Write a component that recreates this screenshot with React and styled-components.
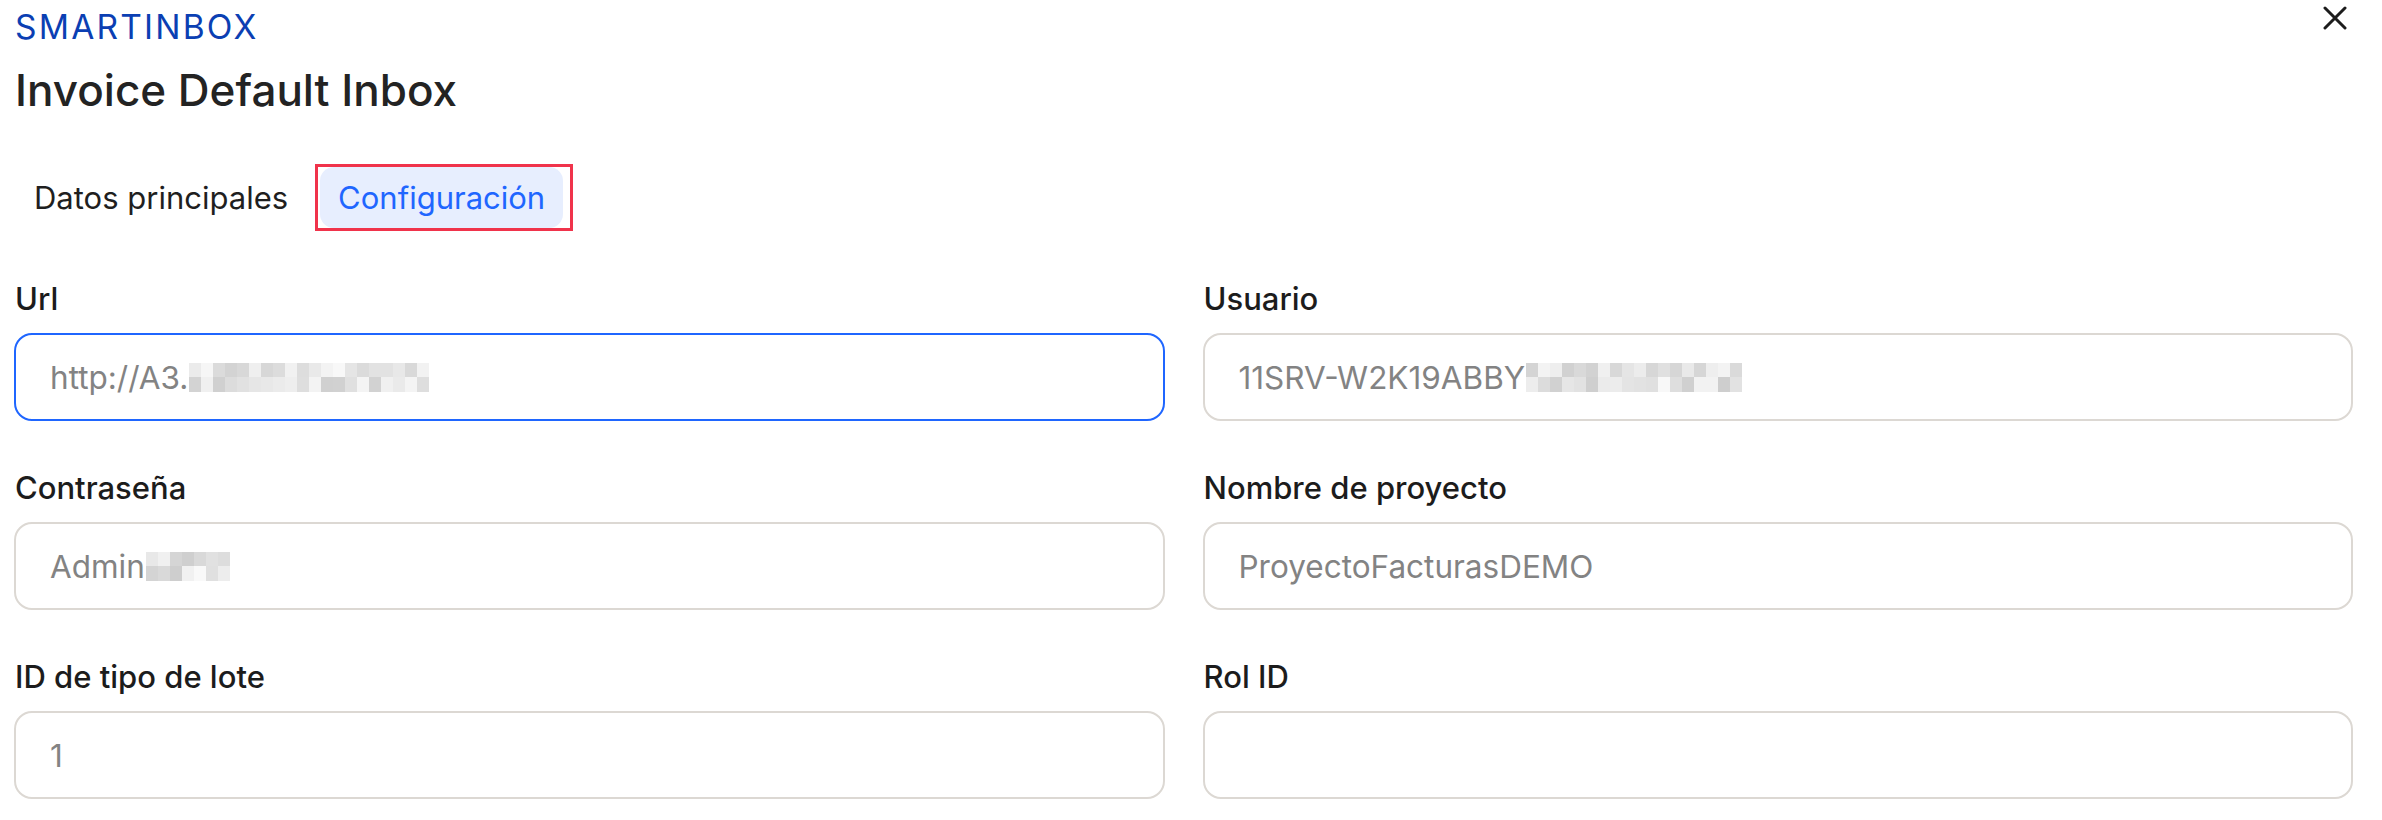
import React from 'react';
import styled, { createGlobalStyle } from 'styled-components';

const GlobalStyle = createGlobalStyle`
  html, body {
    margin: 0;
    padding: 0;
    background: #ffffff;
  }
  body {
    font-family: Inter, "Noto Sans", "Liberation Sans", sans-serif;
    color: #1f1f1f;
  }
`;

const Page = styled.div`
  padding: 0 29px 0 14px;
`;

const Header = styled.div`
  display: flex;
  justify-content: space-between;
  align-items: flex-start;
`;

const Brand = styled.div`
  margin-top: 7px;
  font-size: 33.5px;
  line-height: 40px;
  letter-spacing: 2.2px;
  color: #0b3fb3;
  padding-left: 1px;
`;

const CloseButton = styled.button`
  border: none;
  background: none;
  padding: 6px;
  margin: 0;
  cursor: pointer;
  display: flex;
  color: #1c1c1c;
`;

const Title = styled.h1`
  margin: 17px 0 0;
  padding-left: 1px;
  font-size: 44px;
  line-height: 52px;
  font-weight: 500;
  color: #232323;
`;

const Tabs = styled.div`
  display: flex;
  gap: 14px;
  margin-top: 51px;
  margin-left: 2px;
`;

const Tab = styled.button`
  position: relative;
  border: none;
  margin: 0;
  padding: 0 18px;
  height: 61px;
  line-height: 61px;
  border-radius: 14px;
  font-family: inherit;
  font-size: 31px;
  font-weight: 400;
  cursor: pointer;
  background: ${(p) => (p.$active ? '#e7eefe' : 'transparent')};
  color: ${(p) => (p.$active ? '#1f66ff' : '#1f1f1f')};
`;

const Highlight = styled.span`
  position: absolute;
  top: -3px;
  bottom: -3px;
  left: -5px;
  right: -10px;
  border: 3px solid #f0334b;
  pointer-events: none;
`;

const FormGrid = styled.div`
  display: grid;
  grid-template-columns: 1fr 1fr;
  column-gap: 38px;
  row-gap: 49px;
  margin-top: 53px;
`;

const Field = styled.div`
  display: flex;
  flex-direction: column;
  gap: 16px;
`;

const Label = styled.label`
  font-size: 31px;
  line-height: 36px;
  font-weight: 500;
  color: #1c1c1c;
  padding-left: 1px;
`;

const InputBox = styled.div`
  box-sizing: border-box;
  height: 88px;
  display: flex;
  align-items: center;
  padding: 0 34px;
  border: 2px solid ${(p) => (p.$focused ? '#1f66ff' : '#dcd8d3')};
  border-radius: 18px;
  background: #ffffff;
  font-size: 31.5px;
  color: #838383;
  white-space: nowrap;
  overflow: hidden;
`;

const Mosaic = styled.span`
  display: inline-grid;
  grid-template-columns: repeat(${(p) => p.$cols}, 12px);
  grid-template-rows: 14px 15px;
  margin-left: 1px;
`;

const Cell = styled.span.attrs((p) => ({ style: { background: p.$shade } }))`
  display: block;
`;

const CloseIcon = () => (
  <svg width="24" height="24" viewBox="0 0 24 24" fill="none" stroke="currentColor" strokeWidth="3" strokeLinecap="round">
    <path d="M2 2 L22 22 M22 2 L2 22" />
  </svg>
);

const Blur = ({ cols, seed }) => {
  const cells = [];
  let s = seed;
  for (let i = 0; i < cols * 2; i++) {
    s = (s * 9301 + 49297) % 233280;
    const v = 206 + Math.round((s / 233280) * 44);
    cells.push(<Cell key={i} $shade={`rgb(${v},${v},${v})`} />);
  }
  return <Mosaic $cols={cols}>{cells}</Mosaic>;
};

const fields = [
  { label: 'Url', value: 'http://A3.', blur: 20, focused: true },
  { label: 'Usuario', value: '11SRV-W2K19ABBY', blur: 18 },
  { label: 'Contraseña', value: 'Admin', blur: 7 },
  { label: 'Nombre de proyecto', value: 'ProyectoFacturasDEMO' },
  { label: 'ID de tipo de lote', value: '1' },
  { label: 'Rol ID', value: '' },
];

const App = () => (
  <Page>
    <GlobalStyle />
    <Header>
      <Brand>SMARTINBOX</Brand>
      <CloseButton title="Cerrar">
        <CloseIcon />
      </CloseButton>
    </Header>
    <Title>Invoice Default Inbox</Title>
    <Tabs>
      <Tab>Datos principales</Tab>
      <Tab $active>
        Configuración
        <Highlight />
      </Tab>
    </Tabs>
    <FormGrid>
      {fields.map((f, i) => (
        <Field key={f.label}>
          <Label>{f.label}</Label>
          <InputBox $focused={f.focused}>
            {f.value}
            {f.blur ? <Blur cols={f.blur} seed={i * 37 + 11} /> : null}
          </InputBox>
        </Field>
      ))}
    </FormGrid>
  </Page>
);

export default App;
